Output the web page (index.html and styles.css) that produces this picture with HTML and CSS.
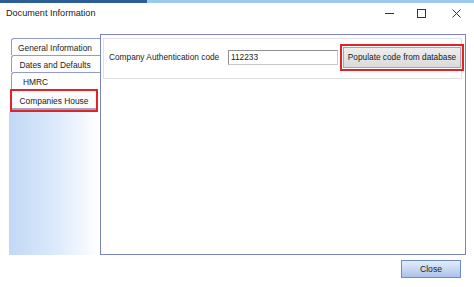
FILE: index.html
```html
<!DOCTYPE html>
<html>
<head>
<meta charset="utf-8">
<link rel="stylesheet" href="styles.css">
</head>
<body>
<div class="window">
  <div class="topbar"><div class="topbar-dark"></div><div class="topbar-light"></div></div>
  <div class="titlebar">
    <span class="title">Document Information</span>
    <div class="controls">
      <svg class="ctl ctl-min" width="9" height="9" viewBox="0 0 9 9"><line x1="0" y1="4.5" x2="9" y2="4.5" stroke="#333" stroke-width="1"/></svg>
      <svg class="ctl ctl-max" width="9" height="9" viewBox="0 0 9 9"><rect x="0.5" y="0.5" width="8" height="8" fill="none" stroke="#333" stroke-width="1"/></svg>
      <svg class="ctl ctl-close" width="9" height="9" viewBox="0 0 9 9"><path d="M0.5 0.5 L8.5 8.5 M8.5 0.5 L0.5 8.5" stroke="#333" stroke-width="1"/></svg>
    </div>
  </div>
  <div class="main">
    <div class="tabs">
      <div class="tab">General Information</div>
      <div class="tab">Dates and Defaults</div>
      <div class="tab tab-left">HMRC</div>
      <div class="tab-selected">Companies House</div>
      <div class="tab-filler"></div>
    </div>
    <div class="panel">
      <div class="group">
        <span class="label">Company Authentication code</span>
        <div class="textbox">112233</div>
        <button class="btn-populate">Populate code from database</button>
      </div>
    </div>
  </div>
  <div class="footer">
    <button class="btn-close">Close</button>
  </div>
</div>
</body>
</html>
```
FILE: styles.css
```css
* { box-sizing: border-box; }
html, body { margin: 0; padding: 0; background: #ffffff; }
body {
  width: 474px;
  height: 287px;
  overflow: hidden;
  font-family: "Liberation Sans", Arial, sans-serif;
  color: #1b1b1b;
}
.window { display: flex; flex-direction: column; width: 474px; height: 287px; }
.topbar { display: flex; height: 3px; }
.topbar-dark { width: 147px; background: #2b5d96; }
.topbar-light { flex: 1; background: #9cc9ee; }
.titlebar {
  display: flex;
  align-items: center;
  height: 20px;
  padding-left: 6px;
}
.title { font-size: 9.1px; color: #1a1a1a; }
.controls { margin-left: auto; display: flex; align-items: center; padding-right: 13px; }
.ctl { display: block; }
.ctl-max { margin-left: 23px; }
.ctl-close { margin-left: 26px; }

.main { display: flex; margin-top: 11px; margin-left: 9px; height: 221px; }
.tabs { width: 91px; display: flex; flex-direction: column; padding-top: 4px; }
.tab {
  margin-left: 2px;
  height: 17px;
  border-top: 1px solid #8e9bcb;
  border-left: 1px solid #8e9bcb;
  border-top-left-radius: 3px;
  font-size: 8.4px;
  line-height: 16px;
  padding-top: 1px;
  text-align: center;
  padding-right: 2px;
  background: #ffffff;
}
.tab-left { text-align: left; padding-left: 11px; }
.tab-selected {
  margin-top: 2px;
  margin-left: 3px;
  width: 84px;
  height: 19px;
  font-size: 8.4px;
  line-height: 16px;
  padding-top: 2px;
  text-align: center;
  background: #fbfbfb;
  border-bottom: 2px solid #9ea7ba;
  outline: 2px solid #e0222a;
}
.tab-filler {
  flex: 1;
  margin-top: 2px;
  background: linear-gradient(to right, #c2d8f6 0%, #d9e7fa 45%, #ffffff 100%);
}
.panel {
  width: 366px;
  height: 221px;
  border: 1px solid #7b86c0;
  padding: 3px 3px 0 2px;
}
.group {
  display: flex;
  align-items: center;
  height: 41px;
  border: 1px solid #e2e2e2;
  padding: 0 0 3px 5px;
  font-size: 8.3px;
}
.label { width: 109px; white-space: nowrap; }
.textbox {
  margin-left: 10px;
  width: 110px;
  height: 15px;
  border: 1px solid #8f8f8f;
  border-right-color: #c8c8c8;
  border-bottom-color: #c8c8c8;
  padding-left: 2px;
  line-height: 13px;
  background: #fff;
}
.btn-populate {
  margin-left: 5px;
  width: 118px;
  height: 21px;
  padding: 0;
  border: 1px solid #a9a9a9;
  background: linear-gradient(#eeeeee, #dadada);
  font-family: "Liberation Sans", Arial, sans-serif;
  font-size: 8.3px;
  color: #1b1b1b;
  outline: 2px solid #e0222a;
  outline-offset: 1px;
}
.footer { display: flex; justify-content: flex-end; padding-right: 13px; margin-top: 5px; }
.btn-close {
  width: 60px;
  height: 18px;
  padding: 0;
  border: 1px solid #6b8bc9;
  background: linear-gradient(#e4edfa, #aac3eb);
  font-family: "Liberation Sans", Arial, sans-serif;
  font-size: 8.6px;
  color: #1b1b1b;
}
```
